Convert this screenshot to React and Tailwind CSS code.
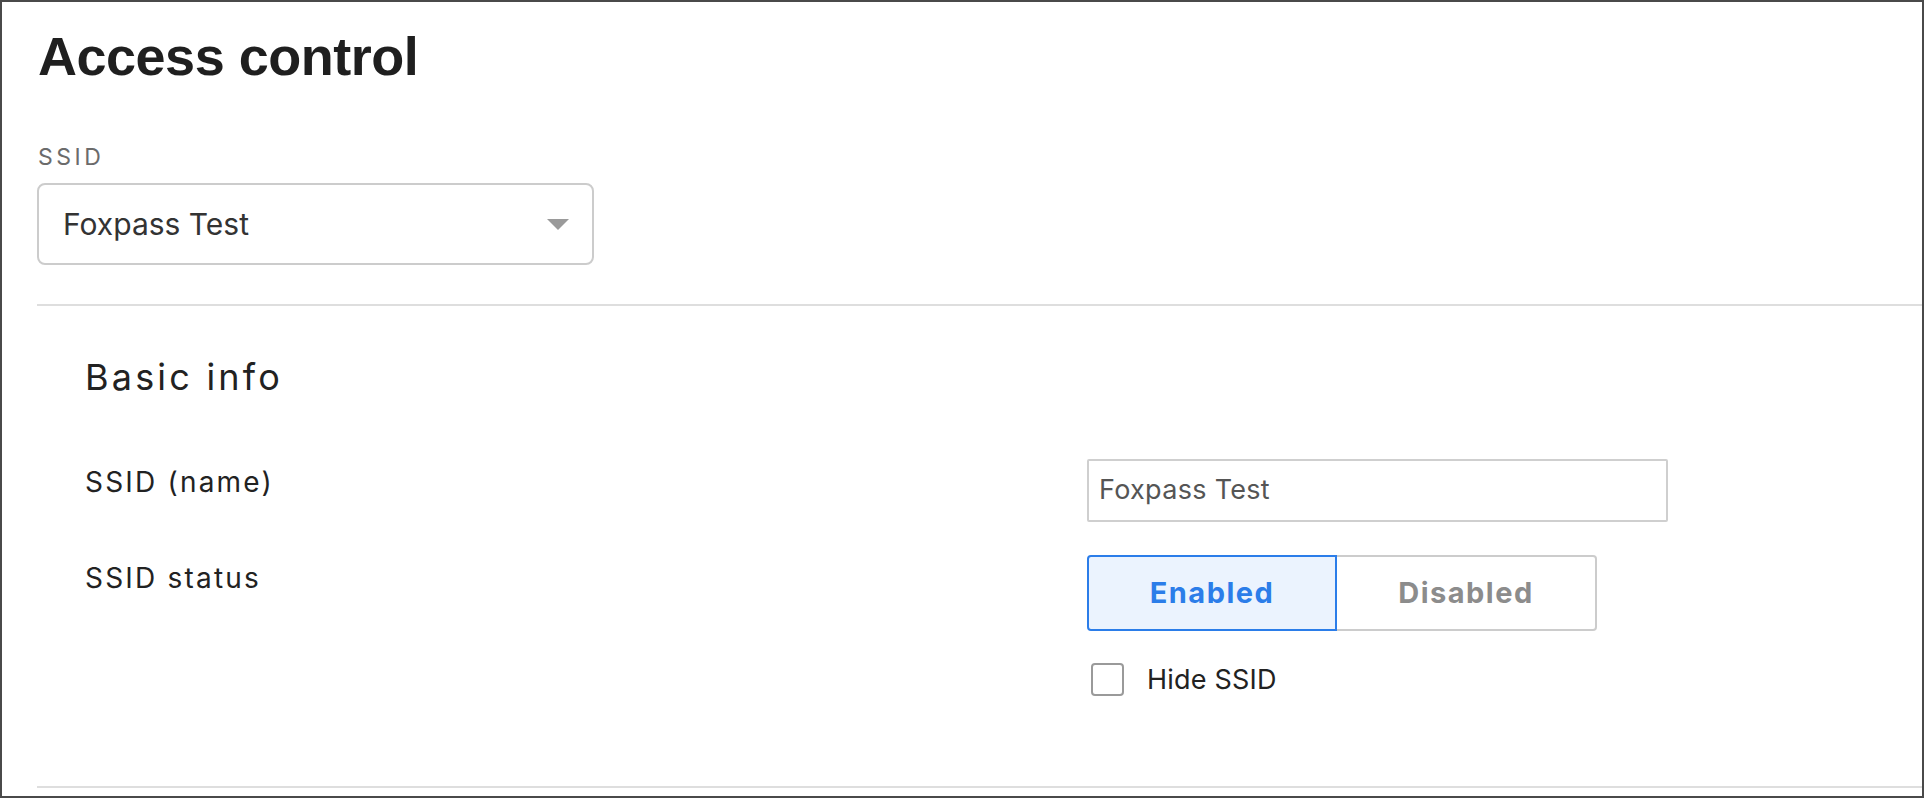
import React from "react";

export default function App() {
  return (
    <div className="w-[1924px] h-[798px] overflow-hidden bg-white border-2 border-[#4a4a4a] font-['Inter',sans-serif] text-[#222]">
      <div className="pl-[35px] pt-[27px]">
        <h1 className="ml-[1px] font-['Liberation_Sans',Arial,sans-serif] font-bold text-[54px] leading-[54px] tracking-[-0.5px] text-[#1f1f1f]">
          Access control
        </h1>
        <div className="mt-[63px] ml-[1px] text-[23px] leading-[23px] tracking-[3.5px] text-[#6b6b6b]">
          SSID
        </div>
        <div className="mt-[14px] w-[557px] h-[82px] border-2 border-[#cccccc] rounded-[8px] flex items-center justify-between pl-[24px] pr-[23px]">
          <span className="text-[30px] leading-[30px] text-[#333]">Foxpass Test</span>
          <svg width="22" height="11" viewBox="0 0 22 11">
            <path d="M0 0 L22 0 L11 11 Z" fill="#9a9a9a" />
          </svg>
        </div>
      </div>

      <div className="ml-[35px] mt-[39px] border-t-2 border-b-2 border-[#dedede] pl-[48px] pt-[53px] pb-[90px]">
        <h2 className="text-[36px] leading-[36px] font-normal tracking-[3.2px] text-[#222]">Basic info</h2>

        <div className="mt-[64px] flex flex-col gap-[33px]">
          <div className="flex items-start">
            <div className="w-[1002px] pt-[9px] text-[28px] leading-[28px] tracking-[2.2px]">SSID (name)</div>
            <div className="w-[581px] h-[63px] border-2 border-[#cfcfcf] rounded-[2px] flex items-center pl-[10px] text-[27px] tracking-[0.3px] text-[#555]">
              Foxpass Test
            </div>
          </div>

          <div className="flex items-start">
            <div className="w-[1002px] pt-[9px] text-[28px] leading-[28px] tracking-[2.2px]">SSID status</div>
            <div className="flex flex-col">
              <div className="flex h-[76px]">
                <div className="w-[250px] h-full border-2 border-[#2b7de9] bg-[#ebf3fe] rounded-l-[4px] flex items-center justify-center text-[29px] font-bold tracking-[1.5px] text-[#2b7de9]">
                  Enabled
                </div>
                <div className="w-[260px] h-full border-2 border-l-0 border-[#cccccc] rounded-r-[4px] flex items-center justify-center text-[29px] font-bold tracking-[1.5px] text-[#8c8c8c]">
                  Disabled
                </div>
              </div>
              <div className="mt-[32px] ml-[4px] flex items-center">
                <div className="w-[33px] h-[33px] border-2 border-[#9a9a9a] rounded-[4px]" />
                <span className="ml-[23px] text-[27px] leading-[27px] tracking-[0.2px] text-[#222]">Hide SSID</span>
              </div>
            </div>
          </div>
        </div>
      </div>
    </div>
  );
}
